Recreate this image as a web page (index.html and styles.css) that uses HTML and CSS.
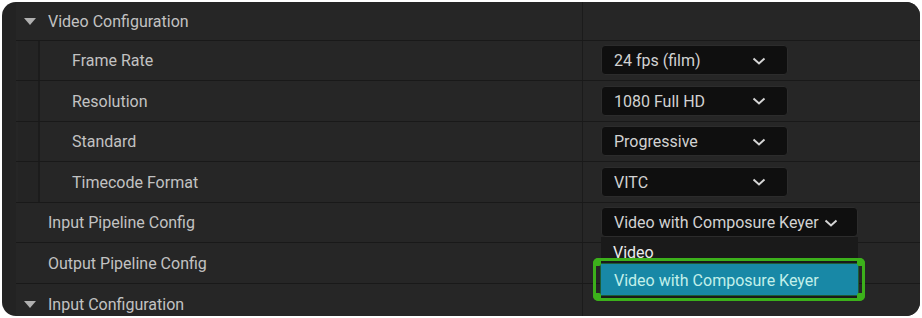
FILE: index.html
```html
<!DOCTYPE html>
<html>
<head>
<meta charset="utf-8">
<link rel="stylesheet" href="styles.css">
</head>
<body>
<div class="panel">
  <div class="row head first">
    <div class="name"><span class="tri"></span>Video Configuration</div>
    <div class="value"></div>
  </div>
  <div class="row nested">
    <div class="name"><span class="stripe"></span><span class="label">Frame Rate</span></div>
    <div class="value"><div class="combo"><span>24 fps (film)</span><svg class="chev" viewBox="0 0 14 8"><path d="M1.5 1.5 L7 6.5 L12.5 1.5"/></svg></div></div>
  </div>
  <div class="row nested">
    <div class="name"><span class="stripe"></span><span class="label">Resolution</span></div>
    <div class="value"><div class="combo"><span>1080 Full HD</span><svg class="chev" viewBox="0 0 14 8"><path d="M1.5 1.5 L7 6.5 L12.5 1.5"/></svg></div></div>
  </div>
  <div class="row nested">
    <div class="name"><span class="stripe"></span><span class="label">Standard</span></div>
    <div class="value"><div class="combo"><span>Progressive</span><svg class="chev" viewBox="0 0 14 8"><path d="M1.5 1.5 L7 6.5 L12.5 1.5"/></svg></div></div>
  </div>
  <div class="row nested">
    <div class="name"><span class="stripe"></span><span class="label">Timecode Format</span></div>
    <div class="value"><div class="combo"><span>VITC</span><svg class="chev" viewBox="0 0 14 8"><path d="M1.5 1.5 L7 6.5 L12.5 1.5"/></svg></div></div>
  </div>
  <div class="row top">
    <div class="name"><span class="label">Input Pipeline Config</span></div>
    <div class="value">
      <div class="combo wide open"><span>Video with Composure Keyer</span><svg class="chev" viewBox="0 0 14 8"><path d="M1.5 1.5 L7 6.5 L12.5 1.5"/></svg>
        <div class="menu">
          <div class="item">Video</div>
          <div class="item sel">Video with Composure Keyer</div>
          <div class="mark"><i class="c tl"></i><i class="c tr"></i><i class="c bl"></i><i class="c br"></i></div>
        </div>
      </div>
    </div>
  </div>
  <div class="row top">
    <div class="name"><span class="label">Output Pipeline Config</span></div>
    <div class="value"></div>
  </div>
  <div class="row head last">
    <div class="name"><span class="tri"></span>Input Configuration</div>
    <div class="value"></div>
  </div>
</div>
</body>
</html>
```

FILE: styles.css
```css
html, body {
  margin: 0;
  padding: 0;
  background: #ffffff;
}
body {
  width: 922px;
  height: 318px;
  font-family: Roboto, "Noto Sans", "DejaVu Sans", sans-serif;
  font-size: 16px;
  color: #c2c2c2;
}
.panel {
  margin: 2px;
  width: 918px;
  height: 314px;
  border-radius: 14px;
  background: #232323;
  overflow: hidden;
  position: relative;
}
.row {
  display: flex;
  margin-left: 14px;
  height: 39.5px;
  border-bottom: 1px solid #191919;
  background: #262626;
}
.row.first { height: 37.5px; }
.row.last { border-bottom: none; height: 40px; }
.name {
  width: 567px;
  flex: none;
  display: flex;
  align-items: center;
  border-right: 1px solid #1b1b1b;
  position: relative;
  padding-top: 1px;
  box-sizing: border-box;
}
.value {
  flex: 1;
  display: flex;
  align-items: center;
  padding-left: 18px;
  position: relative;
}
.head .name { padding-left: 32px; }
.tri {
  width: 0;
  height: 0;
  border-left: 6px solid transparent;
  border-right: 6px solid transparent;
  border-top: 7px solid #b0b0b0;
  margin-left: -24px;
  margin-right: 12px;
}
.nested .name { padding-left: 0; }
.stripe {
  align-self: stretch;
  width: 20px;
  background: #242424;
  border-right: 2px solid #1c1c1c;
  margin-left: 2px;
  margin-top: -1px;
}
.nested .label { padding-left: 32px; }
.top .label { padding-left: 32px; }
.combo {
  width: 187px;
  height: 30px;
  background: #0f0f0f;
  border: 1px solid #2c2c2c;
  border-radius: 4px;
  display: flex;
  align-items: center;
  justify-content: space-between;
  padding: 1px 21px 0 12px;
  box-sizing: border-box;
  color: #d2d2d2;
  position: relative;
}
.combo.wide { width: 257px; padding-right: 19px; }
.chev {
  width: 14px;
  height: 8px;
  fill: none;
  stroke: #d4d4d4;
  stroke-width: 2;
}
.menu {
  position: absolute;
  left: -1px;
  top: 29px;
  width: 257px;
  height: 62px;
  background: #1a1a1a;
  z-index: 2;
}
.item {
  height: 26px;
  line-height: 32px;
  padding-left: 12px;
  color: #ececec;
}
.item.sel {
  margin: 0 -1px 0 -1px;
  height: 33px;
  line-height: 34px;
  background: #1888a6;
  color: #c2f0ea;
  padding-left: 13px;
  border: 1px solid #1d5d36;
  box-sizing: border-box;
}
.mark {
  position: absolute;
  left: -8px;
  top: 21px;
  width: 272px;
  height: 43px;
  border: 3px solid #3cb01b;
  border-radius: 6px;
  box-sizing: border-box;
}
.c {
  position: absolute;
  width: 8px;
  height: 8px;
  background: #3cb01b;
  border-radius: 2px;
}
.c.tl { left: -3px; top: -3px; border-top-left-radius: 5px; }
.c.tr { right: -3px; top: -3px; border-top-right-radius: 5px; }
.c.bl { left: -3px; bottom: -3px; border-bottom-left-radius: 5px; }
.c.br { right: -3px; bottom: -3px; border-bottom-right-radius: 5px; }
```
